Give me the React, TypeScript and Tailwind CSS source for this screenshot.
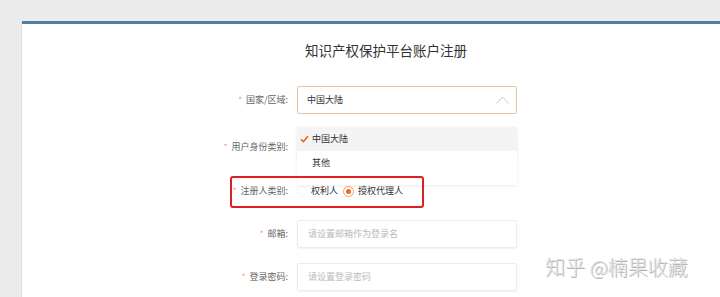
import { ReactNode } from "react";

const font = { fontFamily: '"Noto Sans CJK SC", "Noto Sans", sans-serif' };

function Label({ children }: { children: ReactNode }) {
    return (
        <div className="w-[266px] shrink-0 flex justify-end items-center text-[9px] text-[#666]">
            <span className="text-[#ec8a95] text-[8px] mr-[4px]">*</span>
            <span>{children}</span>
        </div>
    );
}

function TextInput({ placeholder }: { placeholder: string }) {
    return (
        <div className="w-[220px] h-[28px] border border-[#ececec] rounded-[2px] shadow-[0_1px_2px_rgba(0,0,0,0.06)] flex items-center pl-[10px] text-[9px] text-[#bbb]">
            {placeholder}
        </div>
    );
}

export default function App() {
    return (
        <div className="relative w-[720px] h-[297px] overflow-hidden bg-[#ebebeb] pt-[21px] pl-[22px]" style={font}>
            <div className="w-[728px] h-[300px] bg-white border-t-[3px] border-[#4f7eab] shadow-[-1px_0_0_#e0e0e0]">
                <div className="pt-[16px] text-center text-[13.5px] leading-[20px] text-[#333]">知识产权保护平台账户注册</div>

                <div className="mt-[26px] flex flex-col">
                    {/* 国家/区域 */}
                    <div className="flex h-[28px] gap-[9px] relative z-10">
                        <Label>国家/区域:</Label>
                        <div className="relative w-[220px]">
                            <div className="h-[28px] border border-[#e3c6a3] rounded-[2px] flex items-center justify-between pl-[9px] pr-[7px] text-[9px] text-[#333]">
                                <span>中国大陆</span>
                                <svg width="13" height="8" viewBox="0 0 13 8" fill="none" stroke="#c9c9c9" strokeWidth="1">
                                    <path d="M0.5 7.5 L6.5 1 L12.5 7.5" />
                                </svg>
                            </div>
                            <div className="absolute left-0 top-[41px] w-[220px] bg-white pb-[10px] shadow-[0_1px_3px_rgba(0,0,0,0.08)] text-[9px] text-[#333]">
                                <div className="h-[24px] bg-[#f4f4f4] flex items-center pl-[3px]">
                                    <svg width="9" height="8" viewBox="0 0 9 8" fill="none" stroke="#e8671a" strokeWidth="1.6" className="mr-[3px]">
                                        <path d="M1 4.2 L3.4 6.6 L8 1.2" />
                                    </svg>
                                    <span>中国大陆</span>
                                </div>
                                <div className="h-[24px] flex items-center pl-[15px]">其他</div>
                            </div>
                        </div>
                    </div>

                    {/* 用户身份类别 */}
                    <div className="flex h-[28px] gap-[9px] mt-[19px]">
                        <Label>用户身份类别:</Label>
                        <TextInput placeholder="" />
                    </div>

                    {/* 注册人类别 */}
                    <div className="flex h-[28px] gap-[9px] mt-[16px] relative">
                        <Label>注册人类别:</Label>
                        <div className="flex items-center text-[9px] text-[#333]">
                            <span className="w-[10px] h-[10px] rounded-full border border-[#f6f6f6] mr-[4px]" />
                            <span className="mr-[5px]">权利人</span>
                            <span className="w-[11px] h-[11px] rounded-full border border-[#f1a36e] flex items-center justify-center mr-[4px]">
                                <span className="w-[5px] h-[5px] rounded-full bg-[#ef6a12]" />
                            </span>
                            <span>授权代理人</span>
                        </div>
                        <div className="absolute left-[208px] top-[-1px] w-[194px] h-[32px] border-2 border-[#e01f1f] rounded-[3px] pointer-events-none z-20" />
                    </div>

                    {/* 邮箱 */}
                    <div className="flex h-[28px] gap-[9px] mt-[15px]">
                        <Label>邮箱:</Label>
                        <TextInput placeholder="请设置邮箱作为登录名" />
                    </div>

                    {/* 登录密码 */}
                    <div className="flex h-[28px] gap-[9px] mt-[15px]">
                        <Label>登录密码:</Label>
                        <TextInput placeholder="请设置登录密码" />
                    </div>
                </div>
            </div>

            <div
                className="absolute left-[545px] top-[255px] text-[20px] leading-[24px] font-light text-[#e2e2e2] whitespace-nowrap"
                style={{ textShadow: "1px 1px 0 #b4b4b4, -1px -1px 0 #ffffff" }}
            >
                知乎 @楠果收藏
            </div>
        </div>
    );
}
